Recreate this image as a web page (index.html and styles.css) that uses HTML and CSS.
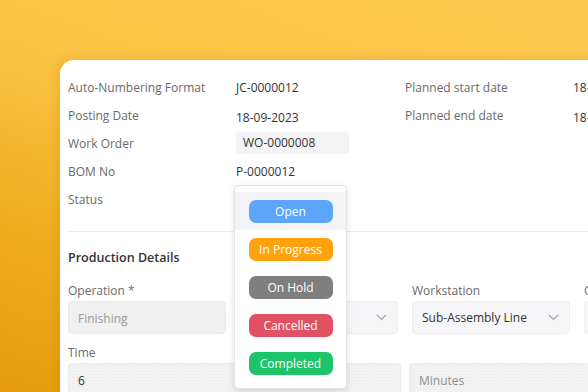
FILE: index.html
```html
<!DOCTYPE html>
<html lang="en">
<head>
	<meta charset="UTF-8">
	<title>Job Card</title>
	<link rel="stylesheet" href="styles.css">
</head>
<body>
	<div class="card">
		<!--基本信息-->
		<div class="info">
			<div class="label">Auto-Numbering Format</div>
			<div class="value">JC-0000012</div>
			<div class="label">Planned start date</div>
			<div class="value">18-09-2023</div>

			<div class="label">Posting Date</div>
			<div class="value low">18-09-2023</div>
			<div class="label">Planned end date</div>
			<div class="value low">18-09-2023</div>

			<div class="label">Work Order</div>
			<div class="value"><span class="chip">WO-0000008</span></div>
			<div></div>
			<div></div>

			<div class="label">BOM No</div>
			<div class="value">P-0000012</div>
			<div></div>
			<div></div>

			<div class="label">Status</div>
			<div class="value"></div>
			<div></div>
			<div></div>
		</div>

		<!--生产明细-->
		<div class="details">
			<h3>Production Details</h3>
			<div class="fields">
				<div class="field">
					<div class="flabel">Operation *</div>
					<div class="input disabled">Finishing</div>
				</div>
				<div class="field">
					<div class="flabel">&nbsp;</div>
					<div class="input select"><span></span><svg class="chev" width="11" height="7" viewBox="0 0 11 7"><path d="M1 1l4.5 4.5L10 1" fill="none" stroke="#a3a3a3" stroke-width="1.1"/></svg></div>
				</div>
				<div class="field">
					<div class="flabel">Workstation</div>
					<div class="input select">Sub-Assembly Line<svg class="chev" width="11" height="7" viewBox="0 0 11 7"><path d="M1 1l4.5 4.5L10 1" fill="none" stroke="#a3a3a3" stroke-width="1.1"/></svg></div>
				</div>
				<div class="field">
					<div class="flabel">Operator</div>
					<div class="input select">&nbsp;</div>
				</div>
			</div>
			<div class="flabel time">Time</div>
			<div class="times">
				<div class="input dotted">6</div>
				<div class="input dotted hint">Minutes</div>
			</div>
		</div>

		<!--状态下拉-->
		<ul class="dropdown">
			<li class="current"><span class="pill open">Open</span></li>
			<li><span class="pill progress">In Progress</span></li>
			<li><span class="pill hold">On Hold</span></li>
			<li><span class="pill cancelled">Cancelled</span></li>
			<li><span class="pill completed">Completed</span></li>
		</ul>
	</div>
</body>
</html>
```

FILE: styles.css
```css
*{
	margin:0px;
	padding:0px;
	box-sizing: border-box;
}

html,body{
	width: 588px;
	height: 392px;
	overflow: hidden;
}

body{
	font-family: "Open Sans", "Noto Sans", sans-serif;
	font-size: 12px;
	color: #333;
	background: linear-gradient(200deg, #fdca50 0%, #fcc444 40%, #eeaa1c 75%, #e59d0c 100%);
	padding: 60px 0 0 60px;
}

ul li{
	list-style: none;
}

.card{
	position: relative;
	width: 700px;
	height: 400px;
	background: #fff;
	border-radius: 14px 0 0 0;
	box-shadow: -2px -2px 10px rgba(160,100,0,0.18);
	padding: 13px 0 0 8px;
}

.info{
	display: grid;
	grid-template-columns: 168px 169px 168px 160px;
	grid-auto-rows: 28px;
	align-items: center;
	padding-bottom: 18px;
	border-bottom: 1px solid #ececec;
}

.label{
	color: #6a6a6a;
}

.value{
	color: #333;
}

.value.low{
	padding-top: 4px;
}

.chip{
	display: inline-block;
	width: 113px;
	height: 22px;
	line-height: 22px;
	padding-left: 7px;
	background: #f3f3f5;
	border-radius: 4px;
}

.details{
	padding-top: 17px;
}

.details h3{
	font-size: 12.5px;
	font-weight: 600;
	color: #333;
	line-height: 18px;
}

.fields{
	display: flex;
	gap: 14px;
	padding-top: 16px;
}

.field{
	width: 158px;
	flex-shrink: 0;
}

.flabel{
	color: #6a6a6a;
	line-height: 16px;
	margin-bottom: 2px;
}

.input{
	height: 33px;
	line-height: 33px;
	padding-left: 9px;
	border: 1px solid #ededf0;
	background: #f6f6f8;
	border-radius: 4px;
	color: #333;
	white-space: nowrap;
}

.input.disabled{
	background: #f0f0f0;
	border-color: #ebebeb;
	color: #9a9a9a;
}

.select{
	display: flex;
	align-items: center;
	justify-content: space-between;
	padding-right: 10px;
	line-height: normal;
}

.flabel.time{
	margin-top: 11px;
}

.times{
	display: flex;
	gap: 8px;
}

.times .input{
	width: 333px;
	flex-shrink: 0;
	height: 40px;
	line-height: 34px;
	background-color: #f2f2f2;
	background-image: radial-gradient(#e9e9e9 0.6px, transparent 0.8px);
	background-size: 3px 3px;
	border-color: #ececec;
}

.times .hint{
	color: #8f8f8f;
}

.dropdown{
	position: absolute;
	left: 174px;
	top: 125px;
	width: 113px;
	height: 204px;
	padding: 6px 0 8px;
	background: #fff;
	border: 1px solid #e4e4e4;
	border-radius: 4px;
	box-shadow: 0 2px 6px rgba(0,0,0,0.12);
}

.dropdown li{
	height: 38px;
	display: flex;
	align-items: center;
	justify-content: center;
}

.dropdown li.current{
	background: #f4f4f6;
}

.pill{
	display: block;
	width: 84px;
	height: 23px;
	line-height: 23px;
	border-radius: 7px;
	text-align: center;
	color: #fff;
	font-size: 12px;
}

.open{ background: #5ca5fb; }
.progress{ background: #ffa20e; }
.hold{ background: #7f7f7f; }
.cancelled{ background: #e25163; }
.completed{ background: #1ec46a; }
```
